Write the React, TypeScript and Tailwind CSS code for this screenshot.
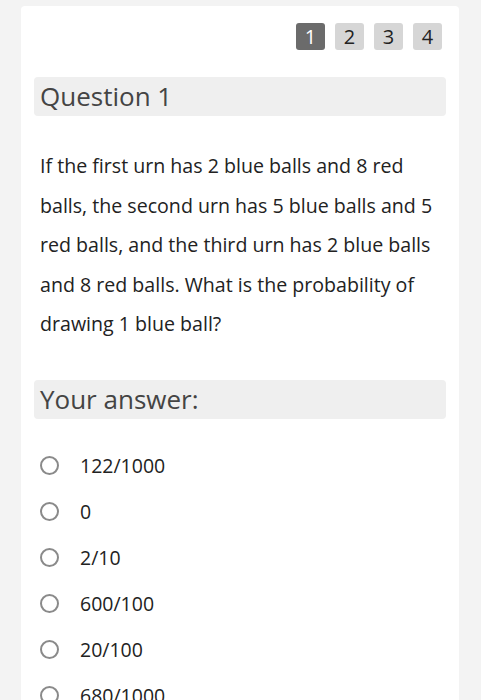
import { useState } from 'react';

const OPTIONS = ['122/1000', '0', '2/10', '600/100', '20/100', '680/1000'];

export default function App() {
  const [page, setPage] = useState(1);
  const [answer, setAnswer] = useState<string | null>(null);

  return (
    <div className="min-h-screen bg-[#f3f3f3] pt-[6px] font-['Open_Sans',sans-serif]">
      <div className="ml-[21px] mr-[22px] h-[720px] rounded-[4px] bg-white px-[13px]">
        <div className="flex justify-end gap-[10px] pr-[4px] pt-[17px]">
          {[1, 2, 3, 4].map((n) => (
            <button
              key={n}
              onClick={() => setPage(n)}
              className={
                n === page
                  ? 'flex h-[27px] w-[29px] items-center justify-center rounded-[3px] bg-[#6b6b6b] text-[20px] leading-none text-white'
                  : 'flex h-[27px] w-[29px] items-center justify-center rounded-[3px] bg-[#d6d6d6] text-[20px] leading-none text-[#222]'
              }
            >
              {n}
            </button>
          ))}
        </div>

        <div className="mt-[27px] flex h-[39px] items-center rounded-[4px] bg-[#efefef] px-[6px]">
          <h2 className="text-[26px] text-[#444]">Question 1</h2>
        </div>

        <p className="mt-[30px] px-[6px] text-[19.6px] leading-[39.6px] text-[#222]">
          If the first urn has 2 blue balls and 8 red balls, the second urn has 5 blue balls and 5 red
          balls, and the third urn has 2 blue balls and 8 red balls. What is the probability of
          drawing 1 blue ball?
        </p>

        <div className="mt-[36px] flex h-[39px] items-center rounded-[4px] bg-[#efefef] px-[6px]">
          <h2 className="text-[26px] text-[#444]">Your answer:</h2>
        </div>

        <div className="mt-[24px] flex flex-col">
          {OPTIONS.map((opt) => (
            <label key={opt} className="flex h-[46px] cursor-pointer items-center px-[6px]">
              <span
                onClick={() => setAnswer(opt)}
                className="flex h-[19px] w-[19px] items-center justify-center rounded-full border-[2px] border-[#8a8a8a]"
              >
                {answer === opt && <span className="h-[9px] w-[9px] rounded-full bg-[#6b6b6b]" />}
              </span>
              <span onClick={() => setAnswer(opt)} className="ml-[21px] text-[19.5px] text-[#222]">
                {opt}
              </span>
            </label>
          ))}
        </div>
      </div>
    </div>
  );
}
